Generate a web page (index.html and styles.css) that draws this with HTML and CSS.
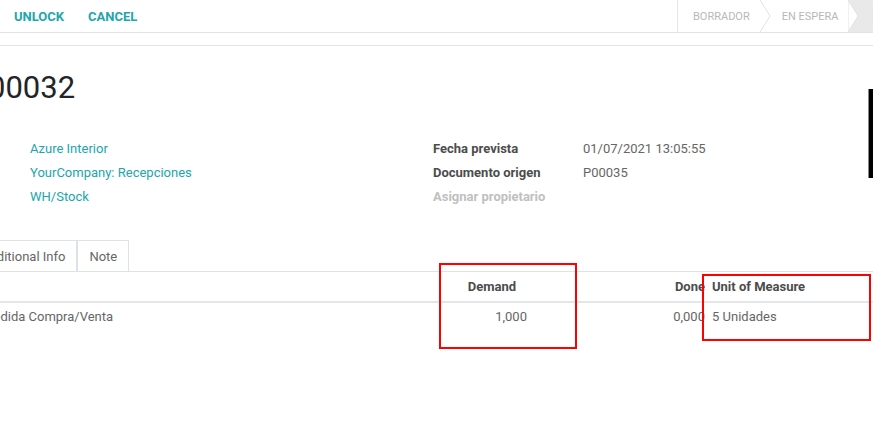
FILE: index.html
```html
<!DOCTYPE html>
<html lang="es">
<head>
  <meta charset="UTF-8">
  <meta name="viewport" content="width=device-width, initial-scale=1">
  <title>WH/IN/00032</title>
  <link rel="stylesheet" href="styles.css">
</head>
<body>

  <div class="control-panel">
    <div class="cp-buttons">
      <button class="btn-link">Unlock</button>
      <button class="btn-link">Cancel</button>
    </div>
    <div class="statusbar">
      <span class="status">Borrador</span>
      <svg class="sep" width="12" height="32" viewBox="0 0 12 32"><polyline points="0,0 10,16 0,32" fill="none" stroke="#e2e2e2" stroke-width="1"/></svg>
      <span class="status">En espera</span>
      <svg class="sep sep-active" width="12" height="32" viewBox="0 0 12 32"><polygon points="0,0 10,16 0,32" fill="#fff" stroke="#e2e2e2" stroke-width="1"/></svg>
      <span class="status active">Listo</span>
    </div>
  </div>

  <div class="sheet">
    <h1 class="title">00032</h1>

    <div class="groups">
      <div class="group group-left">
        <div class="row"><a class="link">Azure Interior</a></div>
        <div class="row"><a class="link">YourCompany: Recepciones</a></div>
        <div class="row"><a class="link">WH/Stock</a></div>
      </div>
      <div class="group group-right">
        <div class="row"><span class="label">Fecha prevista</span><span class="value">01/07/2021 13:05:55</span></div>
        <div class="row"><span class="label">Documento origen</span><span class="value">P00035</span></div>
        <div class="row"><span class="label muted">Asignar propietario</span></div>
      </div>
    </div>

    <div class="tabs">
      <span class="tab first">Additional Info</span>
      <span class="tab">Note</span>
    </div>

    <div class="lines">
      <div class="line-row head">
        <span class="cell product"></span>
        <span class="cell num demand-head">Demand</span>
        <span class="cell num">Done</span>
        <span class="cell uom">Unit of Measure</span>
      </div>
      <div class="line-row">
        <span class="cell product"><span class="cut">Unidad de Medida Compra/Venta</span></span>
        <span class="cell num">1,000</span>
        <span class="cell num">0,000</span>
        <span class="cell uom">5 Unidades</span>
      </div>
    </div>
  </div>

  <div class="mark mark-demand"></div>
  <div class="mark mark-uom"></div>
  <div class="edge-bar"></div>

</body>
</html>
```

FILE: styles.css
```css
body {
  margin: 0;
  width: 873px;
  height: 424px;
  overflow: hidden;
  position: relative;
  background: #fff;
  font-family: Roboto, "Noto Sans", sans-serif;
  font-size: 13px;
  color: #666;
}

/* top bar */
.control-panel {
  display: flex;
  height: 32px;
  border-bottom: 1px solid #e3e3e3;
}

.cp-buttons {
  flex: 0 0 663px;
  display: flex;
  align-items: center;
  gap: 24px;
  padding-left: 14px;
}

.btn-link {
  border: none;
  background: none;
  padding: 0;
  font-family: inherit;
  font-size: 13px;
  font-weight: 700;
  text-transform: uppercase;
  color: #21a6ab;
  cursor: pointer;
}

.statusbar {
  flex: none;
  display: flex;
  align-items: stretch;
  border-left: 1px solid #e6e6e6;
  white-space: nowrap;
}

.status {
  display: flex;
  align-items: center;
  padding: 0 10px;
  font-size: 11px;
  text-transform: uppercase;
  color: #b8b8b8;
}

.status:first-child {
  padding-left: 15px;
}

.sep {
  display: block;
  flex: none;
}

.sep-active {
  background: #e9e9e9;
}

.status.active {
  background: #e9e9e9;
  color: #8a3b53;
  padding-left: 12px;
  padding-right: 30px;
}

/* sheet */
.sheet {
  margin-top: 12px;
  border-top: 1px solid #e3e3e3;
}

.title {
  margin: 24px 0 0 -12px;
  font-size: 31px;
  line-height: 36px;
  font-weight: 400;
  color: #212529;
}

.groups {
  display: flex;
  margin-top: 30px;
}

.group-left {
  width: 403px;
  padding-left: 30px;
}

.row {
  display: flex;
  align-items: center;
  height: 24px;
}

.link {
  color: #21a6ab;
  text-decoration: none;
}

.label {
  width: 150px;
  font-weight: 700;
  color: #4c4c4c;
}

.label.muted {
  color: #c0c0c0;
}

.value {
  color: #666;
}

/* tabs */
.tabs {
  display: flex;
  margin-top: 32px;
  height: 31px;
  border-bottom: 1px solid #dee2e6;
}

.tab {
  display: flex;
  align-items: center;
  padding: 0 11px;
  border: 1px solid #dee2e6;
  border-bottom: none;
  color: #666;
}

.tab.first {
  margin-left: -19px;
  border-left: none;
  padding-left: 0;
}

/* move lines */
.line-row {
  display: grid;
  grid-template-columns: 440px 87px 178px 1fr;
  align-items: center;
}

.line-row.head {
  height: 29px;
  border-bottom: 2px solid #e4e6ea;
  font-weight: 700;
  color: #4c4c4c;
}

.line-row + .line-row {
  height: 27px;
}

.cell {
  white-space: nowrap;
  overflow: hidden;
}

.cell.num {
  text-align: right;
}

.demand-head {
  padding-right: 11px;
}

.cell.uom {
  padding-left: 7px;
}

.product .cut {
  display: inline-block;
  margin-left: -79px;
}

/* annotation boxes drawn over the screenshot */
.mark {
  position: absolute;
  border: 2px solid #ff0000;
}

.mark-demand {
  left: 439px;
  top: 263px;
  width: 134px;
  height: 82px;
}

.mark-uom {
  left: 702px;
  top: 274px;
  width: 165px;
  height: 63px;
}

.edge-bar {
  position: absolute;
  left: 868px;
  top: 89px;
  width: 5px;
  height: 89px;
  background: #000;
  border-left: 1px solid #888;
}
```
